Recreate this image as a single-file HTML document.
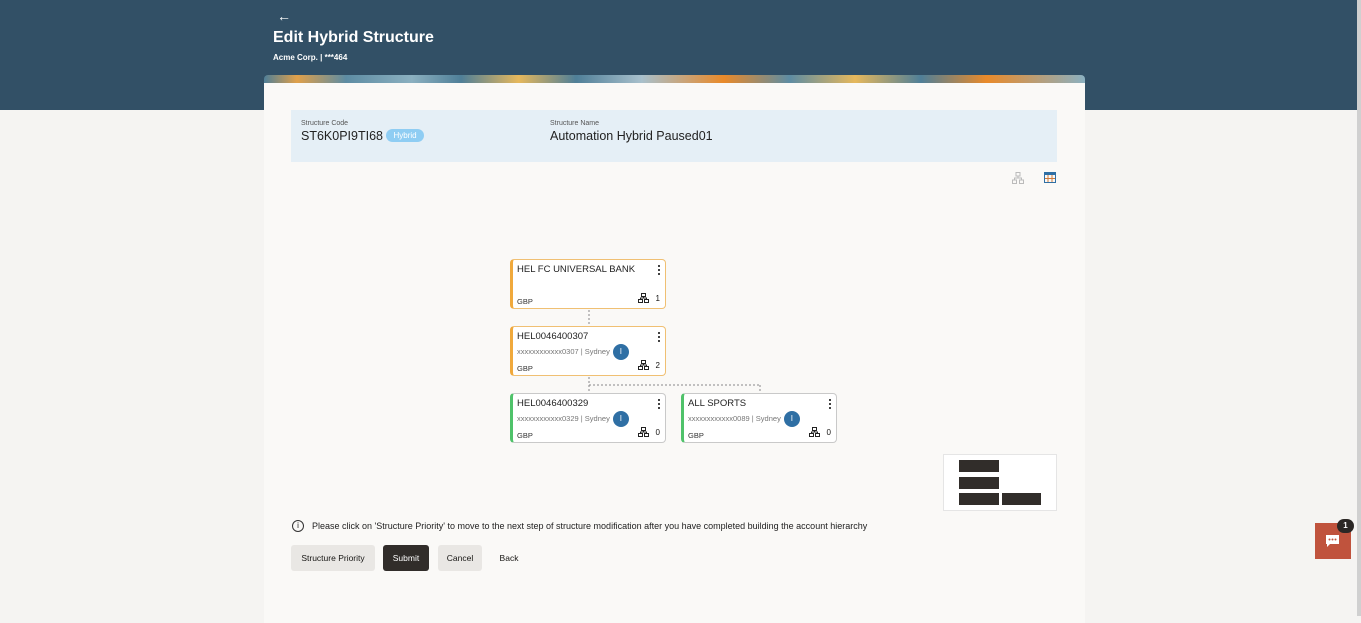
<!DOCTYPE html>
<html><head><meta charset="utf-8"><style>
*{box-sizing:border-box;margin:0;padding:0}
body{width:1361px;height:616px;overflow:hidden;background:#f5f4f2;font-family:"Liberation Sans",sans-serif;position:relative;color:#161513}
.hdr{position:absolute;left:0;top:0;width:1361px;height:110px;background:#325066}
.band{position:absolute;left:264px;top:75px;width:821px;height:10px;border-radius:4px 4px 0 0;background:linear-gradient(90deg,#4f7f98 0,#e0a04a 4%,#5d8ca3 10%,#8bb0c0 18%,#4f7f98 24%,#e6b85c 31%,#4f7f98 38%,#a8c0cc 46%,#e98a2a 56%,#5d8ca3 64%,#e6b85c 72%,#4f7f98 80%,#e98a2a 88%,#8bb0c0 100%)}
.card{position:absolute;left:264px;top:83px;width:821px;height:540px;background:#faf9f7}
.abs{position:absolute}
.node{position:absolute;width:156px;height:50px;background:#fff;border:1px solid #f0c073;border-left:3px solid #f0a93c;border-radius:4px;font-size:9px}
.node.g{border-color:#c9c9c9;border-left-color:#4fc26a}
.node .t{position:absolute;left:4px;top:4px;font-size:9.5px;color:#222}
.node .s{position:absolute;left:4px;top:17px;font-size:7.5px;color:#777}
.node .c{position:absolute;left:4px;top:37px;font-size:7.5px;color:#333}
.node .d{position:absolute;right:5px;top:4px;width:2px;height:11px;background:radial-gradient(circle,#333 1px,transparent 1.2px) 0 0/2px 4px}
.node .n{position:absolute;right:5px;top:34px;font-size:8px}
.node .ic{position:absolute;right:16px;top:33px}
.info{display:inline-block;width:16px;height:16px;border-radius:8px;background:#2f6fa4;color:#fff;font-size:8px;text-align:center;line-height:16px;vertical-align:middle;margin-left:3px}
.btn{position:absolute;top:545px;height:26px;font-size:8.5px;line-height:26px;text-align:center;border-radius:3px}
</style></head><body>
<div class="hdr"></div>
<div class="abs" style="left:277px;top:8px;color:#fff;font-size:14px">←</div>
<div class="abs" style="left:273px;top:29px;color:#fff;font-size:16px;font-weight:bold">Edit Hybrid Structure</div>
<div class="abs" style="left:273px;top:53px;color:#fff;font-size:8px;font-weight:bold">Acme Corp. | ***464</div>
<div class="band"></div>
<div class="card"></div>
<div class="abs" style="left:291px;top:110px;width:766px;height:52px;background:#e5eff6"></div>
<div class="abs" style="left:301px;top:120px;font-size:7px;color:#555">Structure Code</div>
<div class="abs" style="left:301px;top:129px;font-size:12.5px;color:#222">ST6K0PI9TI68 <span style="display:inline-block;background:#8fcdf3;color:#fff;font-size:8px;border-radius:7px;padding:2px 7px;vertical-align:2px">Hybrid</span></div>
<div class="abs" style="left:550px;top:120px;font-size:7px;color:#555">Structure Name</div>
<div class="abs" style="left:550px;top:129px;font-size:12.5px;color:#222">Automation Hybrid Paused01</div>
<svg class="abs" style="left:1012px;top:172px" width="12" height="12" viewBox="0 0 12 12" fill="none" stroke="#bbb"><rect x="4" y="0.5" width="4" height="3.5"/><rect x="0.5" y="8" width="4" height="3.5"/><rect x="7.5" y="8" width="4" height="3.5"/><path d="M6 4v2M2.5 8V6h7v2"/></svg>
<svg class="abs" style="left:1044px;top:172px" width="12" height="11" viewBox="0 0 12 11"><rect x="0.5" y="0.5" width="11" height="10" fill="none" stroke="#2f6fa4"/><rect x="0.5" y="0.5" width="11" height="2.5" fill="#2f6fa4"/><path d="M4 3v7M8 3v7M1 6.5h10" stroke="#d07a3a"/></svg>
<svg class="abs" style="left:500px;top:305px" width="280" height="95" fill="none" stroke="#888" stroke-dasharray="2,2"><line x1="89" y1="5" x2="89" y2="20"/><line x1="89" y1="72" x2="89" y2="88"/><line x1="89" y1="80" x2="260" y2="80"/><line x1="260" y1="80" x2="260" y2="88"/></svg>
<div class="node" style="left:510px;top:259px"><div class="t">HEL FC UNIVERSAL BANK</div><div class="c">GBP</div><div class="d"></div><svg class="ic" width="11" height="10" viewBox="0 0 11 10" fill="none" stroke="#222"><rect x="3.5" y=".5" width="4" height="3"/><rect x=".5" y="6.5" width="4" height="3"/><rect x="6.5" y="6.5" width="4" height="3"/><path d="M5.5 3.5v1.5M2.5 6.5V5h6v1.5"/></svg><div class="n">1</div></div>
<div class="node" style="left:510px;top:326px"><div class="t">HEL0046400307</div><div class="s">xxxxxxxxxxxx0307 | Sydney<span class="info">I</span></div><div class="c">GBP</div><div class="d"></div><svg class="ic" width="11" height="10" viewBox="0 0 11 10" fill="none" stroke="#222"><rect x="3.5" y=".5" width="4" height="3"/><rect x=".5" y="6.5" width="4" height="3"/><rect x="6.5" y="6.5" width="4" height="3"/><path d="M5.5 3.5v1.5M2.5 6.5V5h6v1.5"/></svg><div class="n">2</div></div>
<div class="node g" style="left:510px;top:393px"><div class="t">HEL0046400329</div><div class="s">xxxxxxxxxxxx0329 | Sydney<span class="info">I</span></div><div class="c">GBP</div><div class="d"></div><svg class="ic" width="11" height="10" viewBox="0 0 11 10" fill="none" stroke="#222"><rect x="3.5" y=".5" width="4" height="3"/><rect x=".5" y="6.5" width="4" height="3"/><rect x="6.5" y="6.5" width="4" height="3"/><path d="M5.5 3.5v1.5M2.5 6.5V5h6v1.5"/></svg><div class="n">0</div></div>
<div class="node g" style="left:681px;top:393px"><div class="t">ALL SPORTS</div><div class="s">xxxxxxxxxxxx0089 | Sydney<span class="info">I</span></div><div class="c">GBP</div><div class="d"></div><svg class="ic" width="11" height="10" viewBox="0 0 11 10" fill="none" stroke="#222"><rect x="3.5" y=".5" width="4" height="3"/><rect x=".5" y="6.5" width="4" height="3"/><rect x="6.5" y="6.5" width="4" height="3"/><path d="M5.5 3.5v1.5M2.5 6.5V5h6v1.5"/></svg><div class="n">0</div></div>
<div class="abs" style="left:943px;top:454px;width:114px;height:57px;background:#fff;border:1px solid #e5e5e5"></div>
<div class="abs" style="left:959px;top:460px;width:40px;height:12px;background:#312d2a"></div>
<div class="abs" style="left:959px;top:477px;width:40px;height:12px;background:#312d2a"></div>
<div class="abs" style="left:959px;top:493px;width:40px;height:12px;background:#312d2a"></div>
<div class="abs" style="left:1002px;top:493px;width:39px;height:12px;background:#312d2a"></div>
<div class="abs" style="left:292px;top:520px;width:12px;height:12px;border:1px solid #333;border-radius:6px;font-size:8px;text-align:center;line-height:10px">i</div>
<div class="abs" style="left:312px;top:521px;font-size:9px;color:#222">Please click on 'Structure Priority' to move to the next step of structure modification after you have completed building the account hierarchy</div>
<div class="btn" style="left:291px;width:84px;background:#e9e7e4">Structure Priority</div>
<div class="btn" style="left:383px;width:46px;background:#312d2a;color:#fff">Submit</div>
<div class="btn" style="left:438px;width:44px;background:#e9e7e4">Cancel</div>
<div class="btn" style="left:493px;width:32px">Back</div>
<div class="abs" style="left:1315px;top:523px;width:36px;height:36px;background:#c0533d"></div>
<svg class="abs" style="left:1325px;top:534px" width="15" height="14" viewBox="0 0 15 14"><path d="M1 1h13v9H5l-3 3v-3H1z" fill="#fff"/><circle cx="4.5" cy="5.5" r="1" fill="#c0533d"/><circle cx="7.5" cy="5.5" r="1" fill="#c0533d"/><circle cx="10.5" cy="5.5" r="1" fill="#c0533d"/></svg>
<div class="abs" style="left:1337px;top:519px;width:17px;height:14px;border-radius:7px;background:#2b2725;color:#fff;font-size:8px;font-weight:bold;text-align:center;line-height:14px">1</div>
<div class="abs" style="left:1357px;top:0;width:4px;height:616px;background:#d0d0d0"></div>
</body></html>
